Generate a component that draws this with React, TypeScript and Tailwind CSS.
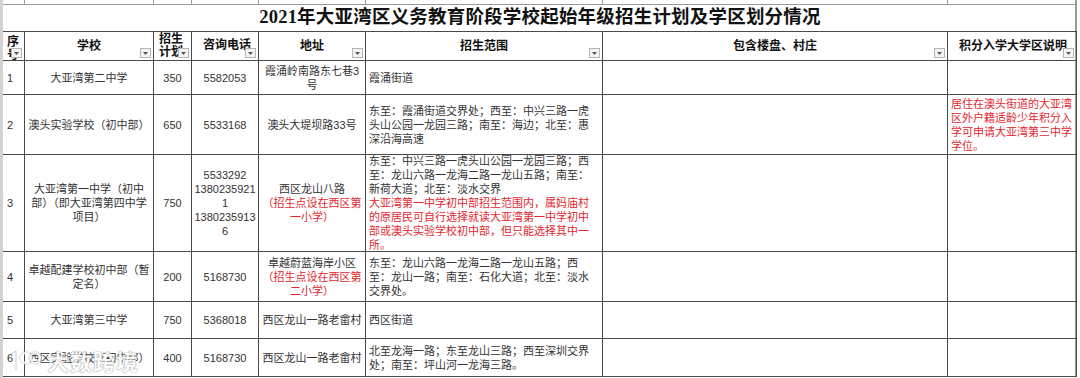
import React from "react";

const FONT = '"Liberation Sans", "Noto Sans CJK SC", sans-serif';

function Drop() {
  return (
    <span className="absolute right-[2px] bottom-[2px] w-[11px] h-[10px] border border-[#b4b4b4] bg-[#f4f4f4] flex items-center justify-center">
      <svg width="5" height="3" viewBox="0 0 5 3">
        <path d="M0 0 L5 0 L2.5 3 Z" fill="#555" />
      </svg>
    </span>
  );
}

function C({
  children,
  className = "",
}: {
  children?: React.ReactNode;
  className?: string;
}) {
  return (
    <div
      className={`relative border-r border-b border-[#4a4a4a] flex flex-col justify-center overflow-hidden text-[11px] leading-[14px] text-[#333] ${className}`}
    >
      {children}
    </div>
  );
}

function H({
  children,
  className = "",
}: {
  children?: React.ReactNode;
  className?: string;
}) {
  return (
    <div
      className={`relative border-r border-b border-[#4a4a4a] flex flex-col justify-center overflow-hidden text-[12px] leading-[13px] font-bold text-[#111] ${className}`}
    >
      {children}
      <Drop />
    </div>
  );
}

const Red = ({ children }: { children: React.ReactNode }) => (
  <span className="text-[#e3262e]">{children}</span>
);

function Lines({ lines }: { lines: string[] }) {
  return (
    <>
      {lines.map((l, i) => (
        <div key={i} className="whitespace-nowrap">
          {l}
        </div>
      ))}
    </>
  );
}

export default function App() {
  return (
    <div
      className="relative w-[1080px] h-[378px] bg-white overflow-hidden flex"
      style={{ fontFamily: FONT }}
    >
      <div className="w-[3px] h-full bg-[#d2d2d2]" />
      <div className="grid w-[1074px] grid-cols-[22px_129px_38px_67px_107px_237px_345px_129px] grid-rows-[5px_27px_29px_34px_60px_97px_50px_37px_38px] border-r-2 border-[#9a9a9a] h-[377px]">
        {/* top strip */}
        {Array.from({ length: 8 }).map((_, i) => (
          <div key={i} className="border-r border-b border-[#9a9a9a]" />
        ))}
        {/* title */}
        <div className="col-span-8 border-b border-[#4a4a4a] flex items-center justify-center">
          <span
            className="text-[18.5px] font-bold text-[#111] tracking-[0.2px]"
            style={{ fontFamily: '"Liberation Serif", "Noto Sans CJK SC", serif' }}
          >
            2021年大亚湾区义务教育阶段学校起始年级招生计划及学区划分情况
          </span>
        </div>
        {/* header */}
        <H className="items-start pl-[4px] justify-start pt-[4px]">
          <div>序</div>
          <div>号</div>
        </H>
        <H className="items-center">学校</H>
        <H className="items-start pl-[5px]">
          <div>招生</div>
          <div>计划</div>
        </H>
        <H className="items-start pl-[11px] pb-[2px]">
          <div className="whitespace-nowrap">咨询电话</div>
        </H>
        <H className="items-center">地址</H>
        <H className="items-center">招生范围</H>
        <H className="items-center">包含楼盘、村庄</H>
        <H className="items-start pl-[11px]">
          <div className="whitespace-nowrap">积分入学大学区说明</div>
        </H>

        {/* row 1 */}
        <C className="pl-[4px]">1</C>
        <C className="items-center">大亚湾第二中学</C>
        <C className="items-center">350</C>
        <C className="items-center">5582053</C>
        <C className="items-center text-center">
          <Lines lines={["霞涌岭南路东七巷3", "号"]} />
        </C>
        <C className="pl-[3px]">霞涌街道</C>
        <C />
        <C />

        {/* row 2 */}
        <C className="pl-[4px]">2</C>
        <C className="items-center">澳头实验学校（初中部）</C>
        <C className="items-center">650</C>
        <C className="items-center">5533168</C>
        <C className="items-center">澳头大堤坝路33号</C>
        <C className="pl-[3px]">
          <Lines
            lines={[
              "东至：霞涌街道交界处；西至：中兴三路一虎",
              "头山公园一龙园三路；南至：海边；北至：惠",
              "深沿海高速",
            ]}
          />
        </C>
        <C />
        <C className="pl-[3px] text-[#e3262e] leading-[13.7px]">
          <Lines
            lines={[
              "居住在澳头街道的大亚湾",
              "区外户籍适龄少年积分入",
              "学可申请大亚湾第三中学",
              "学位。",
            ]}
          />
        </C>

        {/* row 3 */}
        <C className="pl-[4px]">3</C>
        <C className="items-center text-center">
          <Lines
            lines={["大亚湾第一中学（初中", "部）（即大亚湾第四中学", "项目）"]}
          />
        </C>
        <C className="items-center">750</C>
        <C className="items-center text-center leading-[13.3px]">
          <Lines
            lines={["5533292", "1380235921", "1", "1380235913", "6"]}
          />
        </C>
        <C className="items-center text-center">
          <div>西区龙山八路</div>
          <Red>
            <Lines lines={["（招生点设在西区第", "一小学）"]} />
          </Red>
        </C>
        <C className="pl-[3px] leading-[13.8px]">
          <Lines
            lines={[
              "东至：中兴三路一虎头山公园一龙园三路；西",
              "至：龙山六路一龙海二路一龙山五路；南至：",
              "新荷大道；北至：淡水交界",
            ]}
          />
          <Red>
            <Lines
              lines={[
                "大亚湾第一中学初中部招生范围内，属妈庙村",
                "的原居民可自行选择就读大亚湾第一中学初中",
                "部或澳头实验学校初中部，但只能选择其中一",
                "所。",
              ]}
            />
          </Red>
        </C>
        <C />
        <C />

        {/* row 4 */}
        <C className="pl-[4px]">4</C>
        <C className="items-center text-center">
          <Lines lines={["卓越配建学校初中部（暂", "定名）"]} />
        </C>
        <C className="items-center">200</C>
        <C className="items-center">5168730</C>
        <C className="items-center text-center">
          <div>卓越蔚蓝海岸小区</div>
          <Red>
            <Lines lines={["（招生点设在西区第", "二小学）"]} />
          </Red>
        </C>
        <C className="pl-[3px]">
          <Lines
            lines={[
              "东至：龙山六路一龙海二路一龙山五路；西",
              "至：龙山一路；南至：石化大道；北至：淡水",
              "交界处。",
            ]}
          />
        </C>
        <C />
        <C />

        {/* row 5 */}
        <C className="pl-[4px]">5</C>
        <C className="items-center">大亚湾第三中学</C>
        <C className="items-center">750</C>
        <C className="items-center">5368018</C>
        <C className="items-center whitespace-nowrap">西区龙山一路老畲村</C>
        <C className="pl-[3px]">西区街道</C>
        <C />
        <C />

        {/* row 6 */}
        <C className="pl-[4px]">6</C>
        <C className="items-center whitespace-nowrap">西区实验学校（初中部）</C>
        <C className="items-center">400</C>
        <C className="items-center">5168730</C>
        <C className="items-center whitespace-nowrap">西区龙山一路老畲村</C>
        <C className="pl-[3px]">
          <Lines
            lines={[
              "北至龙海一路；东至龙山三路；西至深圳交界",
              "处；南至：坪山河一龙海三路。",
            ]}
          />
        </C>
        <C />
        <C />
      </div>

      {/* watermark */}
      <div className="absolute left-[8px] top-[344px] flex items-center gap-[3px] pointer-events-none opacity-85">
        <svg width="36" height="26" viewBox="0 0 36 26">
          <path
            d="M4 6 L8 3 L8 22"
            stroke="#fff"
            strokeWidth="3"
            fill="none"
          />
          <path
            d="M4 6 L8 3 L8 22"
            stroke="#999"
            strokeWidth="0.6"
            fill="none"
          />
          <circle cx="18" cy="10" r="5" stroke="#fff" strokeWidth="2.6" fill="none" />
          <circle cx="27" cy="10" r="5" stroke="#fff" strokeWidth="2.6" fill="none" />
          <circle cx="18" cy="10" r="6.3" stroke="#aaa" strokeWidth="0.5" fill="none" />
          <circle cx="27" cy="10" r="6.3" stroke="#aaa" strokeWidth="0.5" fill="none" />
        </svg>
        <span
          className="text-[22px] font-bold text-white tracking-[1px] [text-shadow:0_0_1px_#777,0_0_1px_#777]"
          style={{ fontFamily: '"Noto Sans CJK SC", sans-serif' }}
        >
          大数跨境
        </span>
      </div>
    </div>
  );
}
